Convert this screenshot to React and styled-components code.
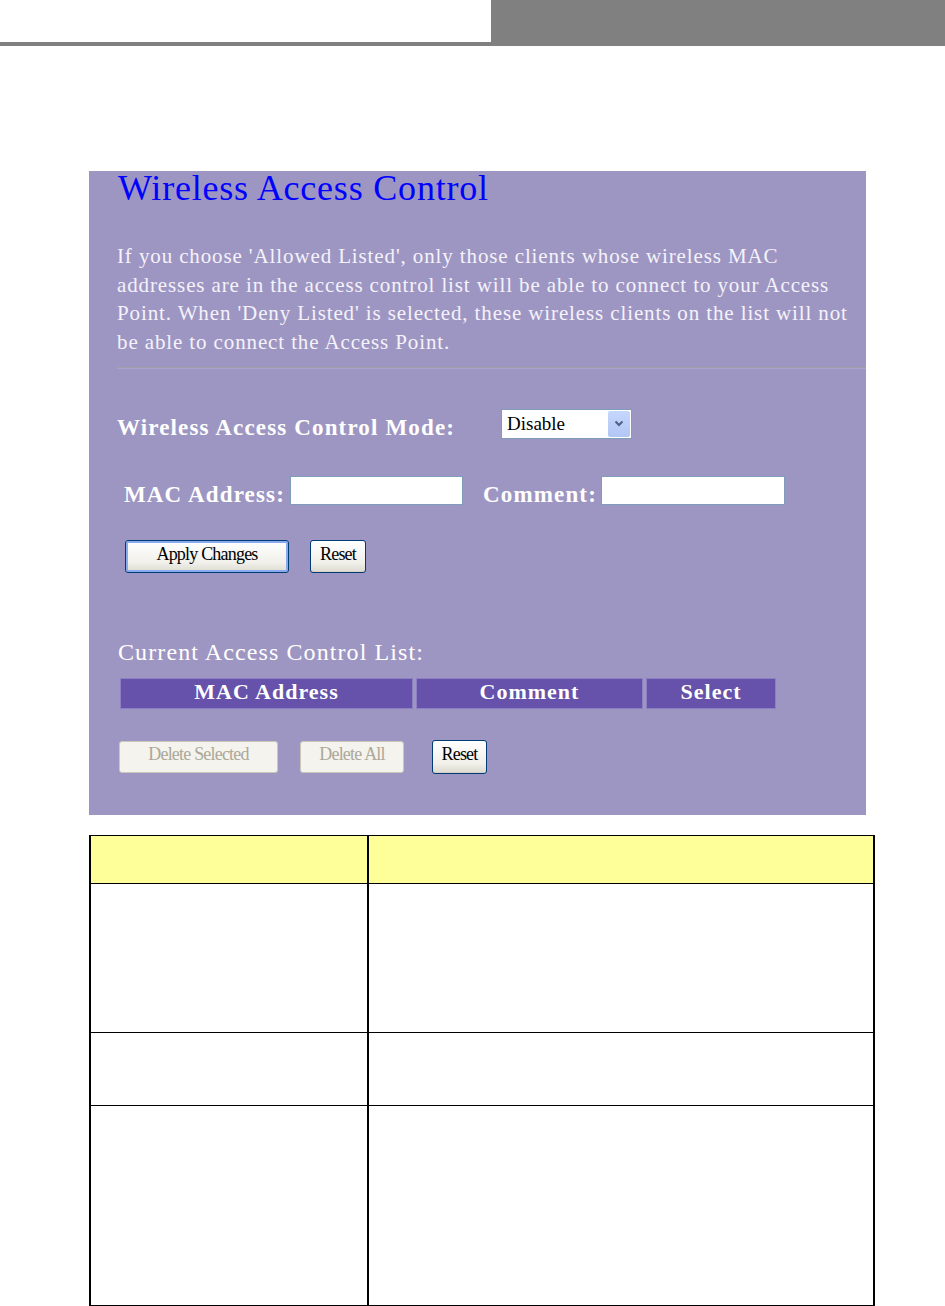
import React from "react";
import styled, { createGlobalStyle } from "styled-components";

export default function App() {
  return (
    <>
      <GlobalStyle />
      <TopBar>
        <TopLeft />
        <TopRight />
      </TopBar>

      <Panel>
        <Title>Wireless Access Control</Title>
        <Intro>
          If you choose 'Allowed Listed', only those clients whose wireless MAC
          <br />
          addresses are in the access control list will be able to connect to your Access
          <br />
          Point. When 'Deny Listed' is selected, these wireless clients on the list will not
          <br />
          be able to connect the Access Point.
        </Intro>
        <Rule />

        <ModeRow>
          <Label $w={384}>Wireless Access Control Mode:</Label>
          <Select>
            <span>Disable</span>
            <DropButton>
              <svg width="10" height="7" viewBox="0 0 10 7">
                <path d="M1.5 1.5 L5 5 L8.5 1.5" fill="none" stroke="#4d6185" strokeWidth="2" />
              </svg>
            </DropButton>
          </Select>
        </ModeRow>

        <FieldRow>
          <Label $w={166} $indent={7}>MAC Address:</Label>
          <TextBox $w={173} />
          <Label $w={118} $indent={20}>Comment:</Label>
          <TextBox $w={184} />
        </FieldRow>

        <ButtonRow $top={35} $indent={8}>
          <XpButton $w={164} $h={33} $default>Apply Changes</XpButton>
          <XpButton $w={56} $h={33} $gap={21}>Reset</XpButton>
        </ButtonRow>

        <ListTitle>Current Access Control List:</ListTitle>
        <ListTable>
          <thead>
            <tr>
              <HeadCell $w={293}>MAC Address</HeadCell>
              <HeadCell $w={227}>Comment</HeadCell>
              <HeadCell $w={130}>Select</HeadCell>
            </tr>
          </thead>
        </ListTable>

        <ButtonRow $top={31} $indent={2}>
          <XpButton $w={159} $h={32} disabled>Delete Selected</XpButton>
          <XpButton $w={104} $h={32} $gap={22} disabled>Delete All</XpButton>
          <XpButton $w={55} $h={34} $gap={28}>Reset</XpButton>
        </ButtonRow>
      </Panel>

      <DescTable>
        <tbody>
          <DescRow $h={48} $head>
            <DescCell $w={276} />
            <DescCell />
          </DescRow>
          <DescRow $h={149}>
            <DescCell $w={276} />
            <DescCell />
          </DescRow>
          <DescRow $h={73}>
            <DescCell $w={276} />
            <DescCell />
          </DescRow>
          <DescRow $h={200}>
            <DescCell $w={276} />
            <DescCell />
          </DescRow>
        </tbody>
      </DescTable>
    </>
  );
}

const GlobalStyle = createGlobalStyle`
  body {
    margin: 0;
    background: #ffffff;
    font-family: "Liberation Serif", "Times New Roman", serif;
  }
`;

const TopBar = styled.header`
  display: flex;
  height: 46px;
`;

const TopLeft = styled.div`
  width: 491px;
  box-sizing: border-box;
  border-bottom: 4px solid #808080;
`;

const TopRight = styled.div`
  flex: 1;
  background: #808080;
`;

const Panel = styled.section`
  display: flex;
  flex-direction: column;
  align-items: flex-start;
  box-sizing: border-box;
  width: 777px;
  height: 644px;
  margin: 125px 0 0 89px;
  padding: 1px 0 0 28px;
  background: #9e96c2;
`;

const Title = styled.h1`
  margin: 0 0 0 1px;
  font-size: 36px;
  line-height: 32px;
  font-weight: normal;
  letter-spacing: 0.8px;
  color: #0000ff;
`;

const Intro = styled.p`
  margin: 38px 0 0;
  font-size: 21px;
  line-height: 28.7px;
  letter-spacing: 0.88px;
  color: #f4f2fa;
  white-space: nowrap;
`;

const Rule = styled.hr`
  align-self: stretch;
  height: 0;
  margin: 10px 0 0;
  border: 0;
  border-top: 1px solid #a39fa9;
  border-bottom: 1px solid #aaa4cc;
`;

const ModeRow = styled.div`
  display: flex;
  height: 30px;
  margin-top: 40px;
`;

const FieldRow = styled.div`
  display: flex;
  height: 29px;
  margin-top: 37px;
`;

const Label = styled.label`
  box-sizing: border-box;
  width: ${(p) => p.$w + (p.$indent || 0)}px;
  padding: 4px 0 0 ${(p) => p.$indent || 0}px;
  font-size: 23px;
  font-weight: bold;
  line-height: 30px;
  letter-spacing: 1.15px;
  color: #ffffff;
  white-space: nowrap;
`;

const Select = styled.div`
  display: flex;
  align-items: center;
  justify-content: space-between;
  box-sizing: border-box;
  width: 131px;
  height: 30px;
  padding: 0 1px 0 5px;
  border: 1px solid #7f9db9;
  background: #ffffff;
  font-size: 19px;
  color: #000000;
`;

const DropButton = styled.div`
  display: flex;
  align-items: center;
  justify-content: center;
  width: 22px;
  height: 26px;
  border-radius: 2px;
  background: linear-gradient(#c6d7fc, #b2c6f5);
`;

const TextBox = styled.div`
  box-sizing: border-box;
  width: ${(p) => p.$w}px;
  height: 29px;
  border: 1px solid #7f9db9;
  background: #ffffff;
`;

const ButtonRow = styled.div`
  display: flex;
  align-items: center;
  margin: ${(p) => p.$top}px 0 0 ${(p) => p.$indent}px;
`;

const XpButton = styled.button`
  box-sizing: border-box;
  width: ${(p) => p.$w}px;
  height: ${(p) => p.$h}px;
  margin-left: ${(p) => p.$gap || 0}px;
  padding: 0 0 4px;
  border: 1px solid #003c74;
  border-radius: 3px;
  background: linear-gradient(#ffffff, #f1f0ea 70%, #dcdad0);
  box-shadow: ${(p) =>
    p.$default ? "inset 0 0 0 2px #8aaaf0" : "inset 0 -1px 0 #d6d0c5"};
  font-family: "Liberation Serif", serif;
  font-size: 18px;
  letter-spacing: -0.8px;
  color: #000000;

  &:disabled {
    border-color: #cac8bb;
    background: #f4f3ee;
    box-shadow: none;
    color: #aca899;
  }
`;

const ListTitle = styled.h2`
  margin: 66px 0 0 1px;
  font-size: 24px;
  font-weight: normal;
  line-height: 26px;
  letter-spacing: 1.1px;
  color: #ffffff;
`;

const ListTable = styled.table`
  margin-top: 13px;
  border-collapse: separate;
  border-spacing: 3px 0;
`;

const HeadCell = styled.th`
  box-sizing: border-box;
  width: ${(p) => p.$w}px;
  height: 31px;
  padding: 0 0 2px;
  border: 1px solid #8a80c2;
  background: #6652aa;
  font-size: 22px;
  letter-spacing: 1px;
  color: #ffffff;
`;

const DescTable = styled.table`
  width: 786px;
  margin: 20px 0 0 89px;
  border-collapse: collapse;
`;

const DescRow = styled.tr`
  height: ${(p) => p.$h}px;
  background: ${(p) => (p.$head ? "#ffff99" : "#ffffff")};
`;

const DescCell = styled.td`
  width: ${(p) => (p.$w ? `${p.$w}px` : "auto")};
  padding: 0;
  border: 1px solid #000000;
  border-left-width: 2px;
  border-right-width: 2px;
`;
